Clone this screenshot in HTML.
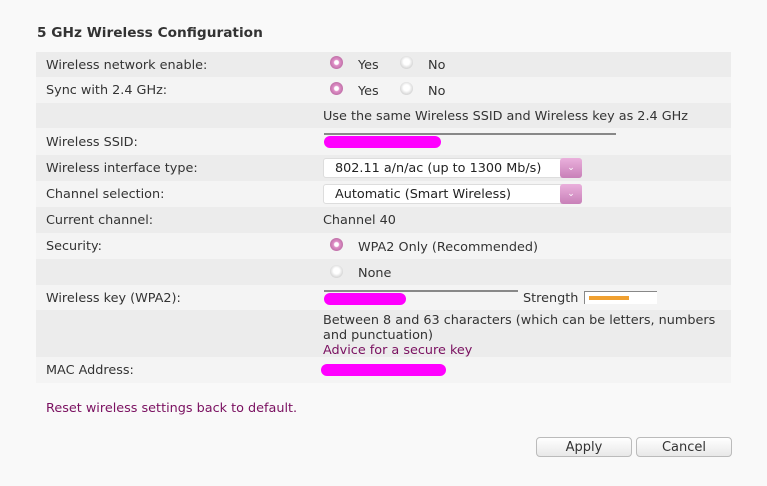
<!DOCTYPE html>
<html><head><style>
body{margin:0;background:#f9f9f9;font-family:"DejaVu Sans","Liberation Sans",sans-serif;font-size:12.8px;color:#333;width:767px;height:486px;overflow:hidden;position:relative}
h1{position:absolute;left:37px;top:25px;margin:0;font-size:13.7px;font-weight:bold;color:#333}
.row{position:absolute;left:36px;width:695px;}
.d{background:#ececec}.l{background:#f4f4f4}
.lab{position:absolute;left:10px;top:6px}
.v{position:absolute;left:287px;top:6px;white-space:nowrap}
.r{position:absolute;width:13px;height:13px;border-radius:50%;}
.on{background:radial-gradient(circle,#fff 0 2px,#e090c8 3px,#c070a8 6.5px)}
.off{background:radial-gradient(circle at 50% 45%,#fff 0 3px,#d8d8d8 6.5px)}
.sel{position:absolute;left:287px;top:3px;width:257px;height:18px;background:#fff;border:1px solid #ddd;border-radius:3px}
.sel span{position:absolute;left:11px;top:2px;color:#222}
.sel i{position:absolute;right:-1px;top:-1px;width:22px;height:20px;background:linear-gradient(#eab0dc,#c880b8);border-radius:3px;color:#fff;font-style:normal;font-size:9px;text-align:center;line-height:20px}
.pink{position:absolute;background:#ff00ff;border-radius:7px;height:12px}
.btn{position:absolute;top:437px;width:94px;height:18px;border:1px solid #bbb;border-radius:4px;background:linear-gradient(#fff,#e8e8e8);text-align:center;line-height:19px;font-size:13px;color:#333}
a{color:#7a1060;text-decoration:none}
</style></head><body>
<h1>5 GHz Wireless Configuration</h1>
<div class="row d" style="top:52px;height:25px"><span class="lab">Wireless network enable:</span>
<div class="r on" style="left:294px;top:4px"></div><span class="v" style="left:322px;top:6px">Yes</span><div class="r off" style="left:364px;top:4px"></div><span class="v" style="left:392px;top:6px">No</span></div>
<div class="row l" style="top:77px;height:26px"><span class="lab">Sync with 2.4 GHz:</span>
<div class="r on" style="left:294px;top:5px"></div><span class="v" style="left:322px;top:7px">Yes</span><div class="r off" style="left:364px;top:5px"></div><span class="v" style="left:392px;top:7px">No</span></div>
<div class="row d" style="top:103px;height:25px"><span class="v" style="top:6px">Use the same Wireless SSID and Wireless key as 2.4 GHz</span></div>
<div class="row l" style="top:128px;height:27px"><span class="lab" style="top:7px">Wireless SSID:</span>
<div style="position:absolute;left:288px;top:5px;width:292px;height:2px;background:#888"></div><div class="pink" style="left:288px;top:8px;width:117px"></div></div>
<div class="row d" style="top:155px;height:26px"><span class="lab" style="top:6px">Wireless interface type:</span><div class="sel"><span>802.11 a/n/ac (up to 1300 Mb/s)</span><i>&#8964;</i></div></div>
<div class="row l" style="top:181px;height:26px"><span class="lab" style="top:6px">Channel selection:</span><div class="sel"><span>Automatic (Smart Wireless)</span><i>&#8964;</i></div></div>
<div class="row d" style="top:207px;height:26px"><span class="lab" style="top:6px">Current channel:</span><span class="v" style="top:6px">Channel 40</span></div>
<div class="row l" style="top:233px;height:26px"><span class="lab" style="top:6px">Security:</span><div class="r on" style="left:294px;top:5px"></div><span class="v" style="left:322px;top:7px">WPA2 Only (Recommended)</span></div>
<div class="row d" style="top:259px;height:26px"><div class="r off" style="left:294px;top:6px"></div><span class="v" style="left:322px;top:7px">None</span></div>
<div class="row l" style="top:285px;height:25px"><span class="lab" style="top:6px">Wireless key (WPA2):</span>
<div style="position:absolute;left:288px;top:5px;width:194px;height:2px;background:#888"></div><div class="pink" style="left:288px;top:8px;width:82px"></div>
<span class="v" style="left:487px;top:6px">Strength</span><div style="position:absolute;left:548px;top:6px;width:72px;height:12px;background:#fff;border-top:1px solid #888;border-left:1px solid #888"></div><div style="position:absolute;left:553px;top:11px;width:40px;height:4px;background:#f0a030"></div></div>
<div class="row d" style="top:310px;height:47px"><div style="position:absolute;left:287px;top:3px;line-height:15px;width:400px">Between 8 and 63 characters (which can be letters, numbers and punctuation)<br><a>Advice for a secure key</a></div></div>
<div class="row l" style="top:357px;height:26px"><span class="lab" style="top:6px">MAC Address:</span><div class="pink" style="left:285px;top:7px;width:125px"></div></div>
<a style="position:absolute;left:46px;top:401px">Reset wireless settings back to default.</a>
<div class="btn" style="left:536px">Apply</div><div class="btn" style="left:636px">Cancel</div>
</body></html>
